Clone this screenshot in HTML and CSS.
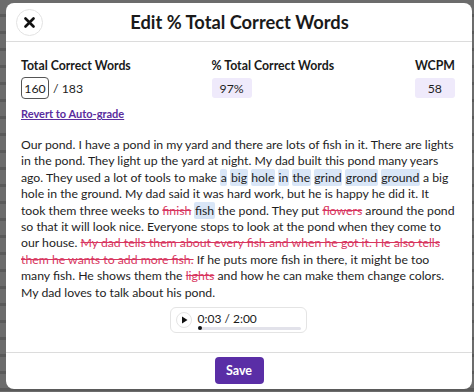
FILE: index.html
```html
<!DOCTYPE html>
<html lang="en">
<head>
<meta charset="utf-8">
<title>Edit % Total Correct Words</title>
<link rel="stylesheet" href="styles.css">
</head>
<body>
<div class="overlay"></div>
<div class="modal" role="dialog" aria-labelledby="modal-title">
  <header class="modal-header">
    <button class="close-btn" aria-label="Close">
      <svg width="11" height="11" viewBox="0 0 11 11"><path d="M1.5 1.5 L9.5 9.5 M9.5 1.5 L1.5 9.5" stroke="#111" stroke-width="2.6" stroke-linecap="round"/></svg>
    </button>
    <h1 id="modal-title" class="modal-title">Edit % Total Correct Words</h1>
  </header>
  <div class="modal-body">
    <div class="stats">
      <div class="stat">
        <div class="stat-label">Total Correct Words</div>
        <div class="stat-value-row">
          <input class="count-input" type="text" value="160" aria-label="Total correct words">
          <span class="count-total">/ 183</span>
        </div>
      </div>
      <div class="stat">
        <div class="stat-label">% Total Correct Words</div>
        <div class="stat-value-row"><span class="pill">97%</span></div>
      </div>
      <div class="stat">
        <div class="stat-label">WCPM</div>
        <div class="stat-value-row"><span class="pill">58</span></div>
      </div>
    </div>
    <a class="revert-link" href="#">Revert to Auto-grade</a>
    <p class="passage">Our pond. I have a pond in my yard and there are lots of fish in it. There are lights<br>
in the pond. They light up the yard at night. My dad built this pond many years<br>
ago. They used a lot of tools to make <span class="hl">a</span> <span class="hl">big</span> <span class="hl">hole</span> <span class="hl">in</span> <span class="hl">the</span> <span class="hl">grind</span> <span class="hl">grond</span> <span class="hl">ground</span> a big<br>
hole in the ground. My dad said it was hard work, but he is happy he did it. It<br>
took them three weeks to <span class="del">finish</span> <span class="hl">fish</span> the pond. They put <span class="del">flowers</span> around the pond<br>
so that it will look nice. Everyone stops to look at the pond when they come to<br>
our house. <span class="del">My dad tells them about every fish and when he got it. He also tells<br>
them he wants to add more fish.</span> If he puts more fish in there, it might be too<br>
many fish. He shows them the <span class="del">lights</span> and how he can make them change colors.<br>
My dad loves to talk about his pond.</p>
    <div class="audio">
      <button class="play-btn" aria-label="Play">
        <svg width="7" height="8" viewBox="0 0 7 8"><path d="M1 0.5 L6.5 4 L1 7.5 Z" fill="#111"/></svg>
      </button>
      <div class="audio-info">
        <span class="audio-time">0:03 / 2:00</span>
        <div class="audio-track"><span class="audio-dot"></span></div>
      </div>
    </div>
  </div>
  <footer class="modal-footer">
    <button class="save-btn">Save</button>
  </footer>
</div>
</body>
</html>
```

FILE: styles.css
```css
* { box-sizing: border-box; }
html, body { margin: 0; padding: 0; }
body {
  width: 474px;
  height: 392px;
  overflow: hidden;
  background: #8c8c8c;
  font-family: "Lato", "Liberation Sans", sans-serif;
  color: #1e1e1e;
}
.overlay {
  position: fixed;
  inset: 0;
  background: repeating-linear-gradient(180deg, #6c6c6c 0, #6c6c6c 14px, #5a5a5a 14px, #5a5a5a 17px);
}
.modal {
  position: fixed;
  top: 3px;
  left: 6px;
  width: 466px;
  height: 386px;
  background: #fff;
  border-radius: 8px;
  display: flex;
  flex-direction: column;
  overflow: hidden;
}
.modal-header {
  height: 39px;
  flex: none;
  border-bottom: 1px solid #dcdcdc;
  display: grid;
  grid-template-columns: 1fr auto 1fr;
  align-items: center;
  padding: 0 9px 0 10px;
}
.close-btn {
  width: 27px;
  height: 27px;
  border-radius: 50%;
  border: 1px solid #e2e2e2;
  background: #fff;
  display: flex;
  align-items: center;
  justify-content: center;
  padding: 0;
  justify-self: start;
}
.modal-title {
  margin: 0;
  font-size: 18.3px;
  font-weight: 700;
  color: #1a1a1a;
}
.modal-body {
  padding: 17px 17px 0 15px;
  flex: 1;
}
.stats {
  display: flex;
  justify-content: space-between;
}
.stat-label {
  font-size: 12.3px;
  font-weight: 700;
  color: #1a1a1a;
  line-height: 14px;
}
.stat-value-row {
  margin-top: 4px;
  display: flex;
  align-items: center;
  gap: 4px;
  height: 22px;
}
.count-input {
  width: 28px;
  height: 22px;
  border: 1px solid #555;
  border-radius: 4px;
  font: inherit;
  font-size: 12.3px;
  text-align: center;
  padding: 0;
  color: #1a1a1a;
}
.count-total { font-size: 12.3px; }
.pill {
  min-width: 40px;
  height: 20px;
  padding: 0 8px;
  border-radius: 3px;
  background: #efeafb;
  font-size: 12.3px;
  display: flex;
  align-items: center;
  justify-content: center;
}
.revert-link {
  display: inline-block;
  margin-top: 8px;
  font-size: 11px;
  line-height: 14px;
  font-weight: 700;
  color: #5a2d9e;
  text-decoration: underline;
}
.passage {
  margin: 16px 0 0;
  font-size: 12.25px;
  line-height: 16.4px;
  white-space: nowrap;
  color: #1e1e1e;
}
.hl {
  background: #d9e6f7;
  border-radius: 2px;
  padding: 1px 0.5px;
}
.del {
  color: #d8365f;
  text-decoration: line-through;
}
.audio {
  margin: 6px auto 0;
  width: 137px;
  height: 26px;
  border: 1px solid #e4e4e4;
  border-radius: 6px;
  display: flex;
  align-items: center;
  gap: 6px;
  padding: 0 5px 0 5px;
}
.play-btn {
  width: 16px;
  height: 16px;
  border-radius: 50%;
  border: 1px solid #e4e4e4;
  background: #fff;
  padding: 0 0 0 1px;
  display: flex;
  align-items: center;
  justify-content: center;
}
.audio-info {
  flex: 1;
  display: flex;
  flex-direction: column;
  gap: 2px;
  padding-top: 1px;
}
.audio-time { font-size: 12px; line-height: 13px; color: #1a1a1a; }
.audio-track {
  height: 3px;
  background: #e2e2ea;
  border-radius: 2px;
  position: relative;
}
.audio-dot {
  position: absolute;
  left: 0;
  top: -0.5px;
  width: 4px;
  height: 4px;
  border-radius: 50%;
  background: #111;
}
.modal-footer {
  flex: none;
  border-top: 1px solid #dcdcdc;
  height: 37px;
  display: flex;
  justify-content: center;
  align-items: flex-start;
  padding-top: 4px;
}
.save-btn {
  width: 49px;
  height: 27px;
  background: #5a2ea6;
  color: #fff;
  border: none;
  border-radius: 4px;
  font-family: inherit;
  font-size: 12.5px;
  font-weight: 700;
}
```
